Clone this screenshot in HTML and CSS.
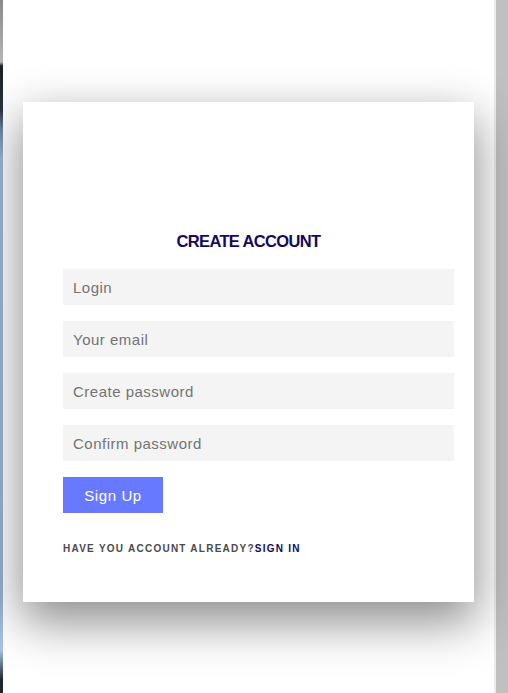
FILE: index.html
```html
<!DOCTYPE html>
<html>
<head>
<meta charset="utf-8">
<link rel="stylesheet" href="styles.css">
</head>
<body>
<div class="page">
  <div class="strip"></div>
  <main class="main">
    <div class="card">
      <h2 class="title">CREATE ACCOUNT</h2>
      <form class="form">
        <input class="field" type="text" placeholder="Login">
        <input class="field" type="email" placeholder="Your email">
        <input class="field" type="password" placeholder="Create password">
        <input class="field" type="password" placeholder="Confirm password">
        <button class="btn" type="button">Sign Up</button>
        <p class="note">HAVE YOU ACCOUNT ALREADY?<a class="link" href="#">SIGN IN</a></p>
      </form>
    </div>
  </main>
  <div class="edge"></div>
  <div class="scrollbar"></div>
</div>
</body>
</html>
```
FILE: styles.css
```css
html, body {
  margin: 0;
  padding: 0;
  height: 100%;
  background: #fff;
  font-family: "Liberation Sans", Arial, sans-serif;
}
.page {
  display: flex;
  height: 693px;
  overflow: hidden;
}
.strip {
  width: 3px;
  flex: none;
  background: linear-gradient(to bottom, #8a8a8a 0px, #b5b5b5 62px, #1a1f26 66px, #2b3542 110px, #6d87a6 130px, #9db7d8 160px, #97b2d3 600px, #a9c4e6 650px, #1c2430 680px);
}
.main {
  flex: 1;
  padding: 102px 0 0 20px;
}
.card {
  width: 451px;
  height: 500px;
  box-sizing: border-box;
  background: #fff;
  box-shadow: 0 18px 45px 2px rgba(0, 0, 0, 0.45);
  padding-top: 130px;
  position: relative;
  z-index: 1;
}
.title {
  margin: 0 0 18px;
  text-align: center;
  font-size: 16.5px;
  line-height: 19px;
  font-weight: bold;
  letter-spacing: -0.65px;
  color: #140a5a;
}
.form {
  display: flex;
  flex-direction: column;
  align-items: flex-start;
  gap: 16px;
  padding: 0 20px 0 40px;
  margin: 0;
}
.field {
  width: 100%;
  height: 36px;
  box-sizing: border-box;
  border: none;
  outline: none;
  background: #f4f4f4;
  padding: 0 10px;
  font-family: "Liberation Sans", Arial, sans-serif;
  font-size: 15px;
  letter-spacing: 0.5px;
  color: #333;
}
.field::placeholder {
  color: #737373;
}
.btn {
  width: 100px;
  height: 36px;
  border: none;
  background: #6779ff;
  color: #fff;
  font-family: "Liberation Sans", Arial, sans-serif;
  font-size: 15px;
  letter-spacing: 0.6px;
  padding: 0;
}
.note {
  margin: 13px 0 0;
  font-size: 10px;
  line-height: 13px;
  font-weight: bold;
  letter-spacing: 1.25px;
  color: #4a4a4a;
}
.link {
  color: #140a5a;
  text-decoration: none;
}
.edge {
  width: 2px;
  flex: none;
  background: #ececec;
}
.scrollbar {
  width: 12px;
  flex: none;
  background: #c0c0c0;
}
```
